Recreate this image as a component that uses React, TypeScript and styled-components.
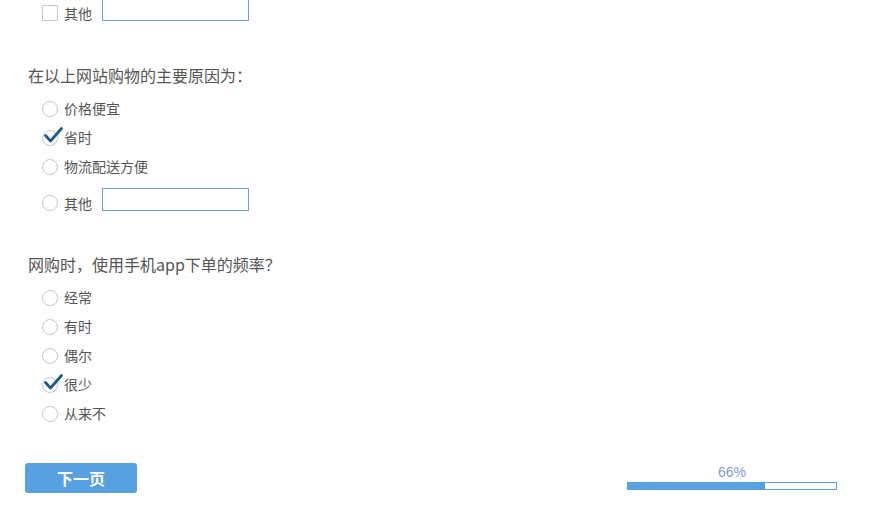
import React from "react";
import styled, { createGlobalStyle } from "styled-components";

const Global = createGlobalStyle`
  html, body { margin: 0; padding: 0; background: #fff; }
  body {
    font-family: "Microsoft YaHei", "Noto Sans CJK SC", "Noto Sans", sans-serif;
    color: #555;
    overflow: hidden;
    text-spacing-trim: space-all;
    font-kerning: none;
    font-feature-settings: "kern" 0, "palt" 0, "halt" 0;
  }
`;

const Page = styled.div`
  width: 877px;
  height: 531px;
  padding-left: 28px;
  box-sizing: border-box;
  display: flex;
  flex-direction: column;
`;

const TopTail = styled.div`
  margin-top: -2px;
  margin-bottom: 45px;
  padding-left: 14px;
`;

const Question = styled.section`
  display: flex;
  flex-direction: column;
  margin-bottom: 44px;
  &:last-of-type { margin-bottom: 35px; }
`;

const Title = styled.div`
  font-size: 16px;
  line-height: 18px;
  height: 18px;
  padding-bottom: 2px;
  color: #555;
  margin-bottom: 8px;
  white-space: nowrap;
`;

const Options = styled.div`
  display: flex;
  flex-direction: column;
  padding-left: 14px;
`;

const Row = styled.label`
  display: flex;
  align-items: center;
  height: 29px;
  font-size: 14px;
  color: #555;
`;

const OtherRow = styled.label<{ $pad?: number }>`
  display: flex;
  align-items: flex-end;
  padding-top: ${(p) => p.$pad ?? 7}px;
  height: 23px;
  font-size: 14px;
  color: #555;
`;

const Mark = styled.span<{ $square?: boolean }>`
  position: relative;
  width: 16px;
  height: 16px;
  box-sizing: border-box;
  border: 1px solid #c6c6c6;
  border-radius: ${(p) => (p.$square ? "1px" : "50%")};
  margin-right: 6px;
  flex: none;
`;

const Check = styled.svg`
  position: absolute;
  left: 0px;
  top: -5px;
  width: 20px;
  height: 18px;
  overflow: visible;
`;

const Label = styled.span`
  line-height: 16px;
  padding-bottom: 2px;
`;

const OtherLabel = styled.span`
  line-height: 16px;
  width: 38px;
  margin-bottom: 0px;
`;

const TextBox = styled.span`
  display: block;
  width: 147px;
  height: 23px;
  box-sizing: border-box;
  border: 1px solid #72a4ae;
  background: #fff;
`;

const Footer = styled.div`
  display: flex;
  align-items: flex-start;
  margin-left: -3px;
  padding-right: 40px;
`;

const NextButton = styled.button`
  width: 112px;
  height: 30px;
  border: none;
  border-radius: 3px;
  background: #57a1e2;
  color: #fff;
  font-family: inherit;
  font-size: 16px;
  font-weight: bold;
  padding: 0;
  cursor: pointer;
`;

const Progress = styled.div`
  margin-left: auto;
  display: flex;
  flex-direction: column;
  align-items: center;
  width: 210px;
`;

const Percent = styled.div`
  font-family: "Liberation Sans", Arial, sans-serif;
  font-size: 14px;
  line-height: 17px;
  color: #8499dc;
  margin-bottom: 1px;
  margin-top: 1px;
`;

const Bar = styled.div`
  width: 210px;
  height: 8px;
  box-sizing: border-box;
  border: 1px solid #57a1e2;
  background: #fff;
`;

const Fill = styled.div`
  height: 100%;
  background: #57a1e2;
`;

const Tick = () => (
  <Check viewBox="0 0 20 18">
    <path d="M2.5 9.5 L7.5 15 L18.5 2.5" fill="none" stroke="#1f5b86" strokeWidth="2.8" strokeLinecap="round" strokeLinejoin="round" />
  </Check>
);

type Opt = { text: string; checked?: boolean };

const Choice = ({ text, checked }: Opt) => (
  <Row>
    <Mark>{checked && <Tick />}</Mark>
    <Label>{text}</Label>
  </Row>
);

const q1: Opt[] = [{ text: "价格便宜" }, { text: "省时", checked: true }, { text: "物流配送方便" }];
const q2: Opt[] = [
  { text: "经常" },
  { text: "有时" },
  { text: "偶尔" },
  { text: "很少", checked: true },
  { text: "从来不" },
];

export default function App() {
  const pct = 66;
  return (
    <>
      <Global />
      <Page lang="zh-CN">
        <TopTail>
          <OtherRow $pad={0}>
            <Mark $square />
            <OtherLabel>其他</OtherLabel>
            <TextBox />
          </OtherRow>
        </TopTail>

        <Question>
          <Title>在以上网站购物的主要原因为：</Title>
          <Options>
            {q1.map((o) => (
              <Choice key={o.text} {...o} />
            ))}
            <OtherRow>
              <Mark />
              <OtherLabel>其他</OtherLabel>
              <TextBox />
            </OtherRow>
          </Options>
        </Question>

        <Question>
          <Title>网购时，使用手机app下单的频率？</Title>
          <Options>
            {q2.map((o) => (
              <Choice key={o.text} {...o} />
            ))}
          </Options>
        </Question>

        <Footer>
          <NextButton>下一页</NextButton>
          <Progress>
            <Percent>{pct}%</Percent>
            <Bar>
              <Fill style={{ width: `${pct}%` }} />
            </Bar>
          </Progress>
        </Footer>
      </Page>
    </>
  );
}
